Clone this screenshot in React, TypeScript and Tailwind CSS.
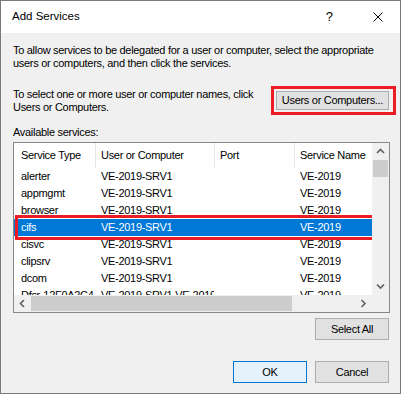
import React from "react";

const ROWS = [
  ["alerter", "VE-2019-SRV1", "", "VE-2019"],
  ["appmgmt", "VE-2019-SRV1", "", "VE-2019"],
  ["browser", "VE-2019-SRV1", "", "VE-2019"],
  ["cifs", "VE-2019-SRV1", "", "VE-2019"],
  ["cisvc", "VE-2019-SRV1", "", "VE-2019"],
  ["clipsrv", "VE-2019-SRV1", "", "VE-2019"],
  ["dcom", "VE-2019-SRV1", "", "VE-2019"],
  ["Dfsr-12F0A2C4", "VE-2019-SRV1.VE-2019.local", "", "VE-2019"],
];

const COLS = [
  { label: "Service Type", w: "w-[81px]" },
  { label: "User or Computer", w: "w-[119px]" },
  { label: "Port", w: "w-[80px]" },
  { label: "Service Name", w: "w-[100px]" },
];

function Chevron({ dir }: { dir: "up" | "down" | "left" | "right" }) {
  const pts = {
    up: "1,5 4.5,1.5 8,5",
    down: "1,1.5 4.5,5 8,1.5",
    left: "5,1 1.5,4.5 5,8",
    right: "1.5,1 5,4.5 1.5,8",
  }[dir];
  const box = dir === "up" || dir === "down" ? "0 0 9 7" : "0 0 7 9";
  return (
    <svg
      viewBox={box}
      className={dir === "up" || dir === "down" ? "w-[9px] h-[7px]" : "w-[7px] h-[9px]"}
    >
      <polyline points={pts} fill="none" stroke="#606060" strokeWidth="1.6" />
    </svg>
  );
}

function WinButton({ children, primary }: { children: React.ReactNode; primary?: boolean }) {
  return (
    <button
      type="button"
      className={`h-[22px] w-[74px] border text-[11px] tracking-[-0.3px] text-black ${
        primary ? "border-[#0078d7] bg-[#e5f1fb]" : "border-[#adadad] bg-[#e1e1e1]"
      }`}
    >
      {children}
    </button>
  );
}

export default function App() {
  return (
    <div
      className="w-[404px] h-[396px] bg-white overflow-hidden"
      style={{ fontFamily: '"Liberation Sans", Arial, sans-serif' }}
    >
      <div className="w-[401px] h-[394px] border border-[#7a7a7a] flex flex-col bg-[#f0f0f0]">
        <div className="h-[32px] shrink-0 bg-white flex items-center">
          <span className="pl-[11px] text-[11.5px] text-black">Add Services</span>
          <span className="ml-auto text-[13px] text-black mr-[40px]">?</span>
          <svg viewBox="0 0 10 10" className="w-[10px] h-[10px] mr-[17px]">
            <path d="M0.5 0.5 L9.5 9.5 M9.5 0.5 L0.5 9.5" stroke="#000" strokeWidth="1" />
          </svg>
        </div>

        <div className="flex-1 pl-[12px] pr-[10px] pt-[11px] text-[11px] tracking-[-0.3px] text-black leading-[13px]">
          <p className="whitespace-nowrap">
            To allow services to be delegated for a user or computer, select the appropriate
            <br />
            users or computers, and then click the services.
          </p>

          <div className="mt-[16px] flex items-start justify-between">
            <p className="mt-[2px] whitespace-nowrap">
              To select one or more user or computer names, click
              <br />
              Users or Computers.
            </p>
            <div className="border-[3px] border-[#ec1c24] py-[2px] pl-[2px] pr-[4px] -mr-[6px]">
              <button
                type="button"
                className="h-[19px] w-[113px] border border-[#adadad] bg-[#e1e1e1] text-[11px] tracking-[-0.3px] text-black"
              >
                Users or Computers...
              </button>
            </div>
          </div>

          <p className="mt-[11px]">Available services:</p>

          <div className="mt-[3px] h-[171px] border border-[#828790] bg-white flex flex-col">
            <div className="flex h-[152px]">
              <div className="w-[358px] flex flex-col overflow-hidden">
                <div className="h-[25px] shrink-0 flex">
                  {COLS.map((c, i) => (
                    <div
                      key={c.label}
                      className={`${c.w} shrink-0 flex items-center whitespace-nowrap overflow-hidden ${
                        i === 0 ? "pl-[7px]" : "border-l border-[#e5e5e5] pl-[5px]"
                      }`}
                    >
                      {c.label}
                    </div>
                  ))}
                </div>
                {ROWS.map((r, ri) => {
                  const sel = r[0] === "cifs";
                  return (
                    <div
                      key={ri}
                      className={`relative h-[17px] shrink-0 flex items-center ${
                        sel ? "bg-[#0078d7] text-white" : ""
                      }`}
                    >
                      {r.map((cell, ci) => (
                        <div
                          key={ci}
                          className={`${COLS[ci].w} shrink-0 whitespace-nowrap overflow-hidden ${
                            ci === 0 ? "pl-[7px]" : "pl-[6px]"
                          }`}
                        >
                          {cell}
                        </div>
                      ))}
                      {sel && (
                        <div className="absolute -top-[4px] -bottom-[4px] left-[1px] -right-[6px] border-[3px] border-[#ec1c24]" />
                      )}
                    </div>
                  );
                })}
              </div>
              <div className="w-[17px] bg-[#f0f0f0] flex flex-col">
                <div className="h-[17px] flex items-center justify-center">
                  <Chevron dir="up" />
                </div>
                <div className="h-[17px] mx-[1px] bg-[#cdcdcd]" />
                <div className="flex-1" />
                <div className="h-[17px] flex items-center justify-center">
                  <Chevron dir="down" />
                </div>
              </div>
            </div>
            <div className="h-[17px] flex bg-[#f0f0f0]">
              <div className="w-[17px] flex items-center justify-center">
                <Chevron dir="left" />
              </div>
              <div className="w-[261px] my-[1px] bg-[#cdcdcd]" />
              <div className="flex-1" />
              <div className="w-[17px] flex items-center justify-center">
                <Chevron dir="right" />
              </div>
              <div className="w-[17px]" />
            </div>
          </div>

          <div className="mt-[5px] flex justify-end mr-[1px]">
            <WinButton>Select All</WinButton>
          </div>

          <div className="mt-[21px] flex justify-end gap-[8px] mr-[1px]">
            <WinButton primary>OK</WinButton>
            <WinButton>Cancel</WinButton>
          </div>
        </div>
      </div>
    </div>
  );
}
